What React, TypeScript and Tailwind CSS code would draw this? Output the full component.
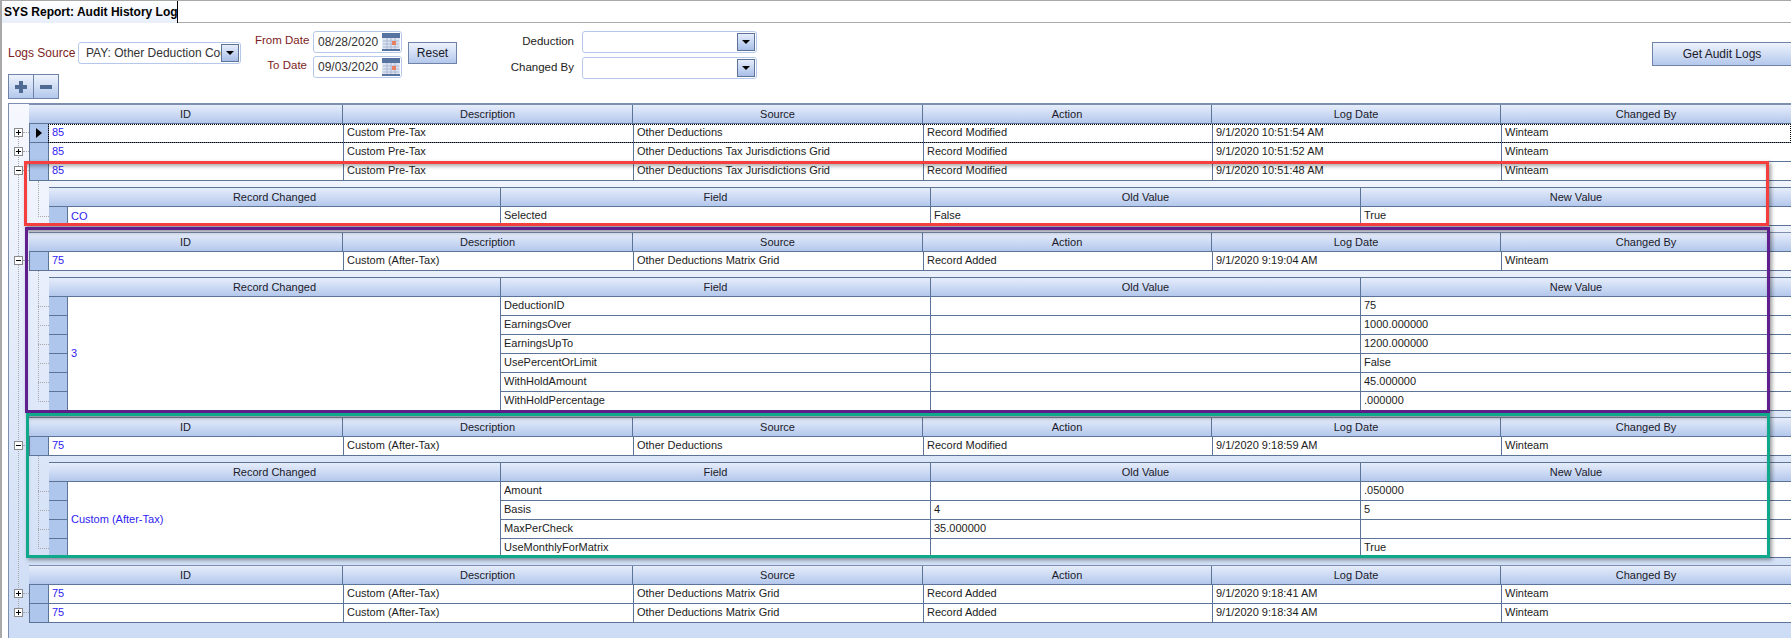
import React from "react";

const masterCols = "grid-cols-[19px_294px_290px_290px_289px_289px_1fr]";
const detailCols = "grid-cols-[19px_432px_430px_430px_1fr]";
const masterHeads = ["ID", "Description", "Source", "Action", "Log Date", "Changed By"];
const detailHeads = ["Record Changed", "Field", "Old Value", "New Value"];

type Row = string[];

function Expander({ open }: { open?: boolean }) {
  return (
    <span className="absolute left-[5px] top-[4px] w-[9px] h-[9px] border border-[#8a8a8a] bg-white flex items-center justify-center">
      <span className="relative block w-[5px] h-[1px] bg-black">
        {!open && <span className="absolute left-[2px] top-[-2px] w-[1px] h-[5px] bg-black" />}
      </span>
    </span>
  );
}

function HeadCell({ text, first }: { text: string; first?: boolean }) {
  return (
    <div className={`flex items-center justify-center h-full bg-gradient-to-b from-[#e6edfb] to-[#b4c8ec] border-b border-[#5d7499] ${first ? "" : "border-l"} border-[#5d7499] text-[#1a1a2a]`}>
      {text}
    </div>
  );
}

function MasterHeader() {
  return (
    <div className="ml-[20px] h-[20px] border-t border-[#7d8fae] flex bg-gradient-to-b from-[#e6edfb] to-[#b4c8ec]">
      <div className={`grid ${masterCols} w-full`}>
        <div className="col-span-2"><HeadCell text="ID" first /></div>
        {masterHeads.slice(1).map((h) => <HeadCell key={h} text={h} />)}
      </div>
    </div>
  );
}

function MasterRow({ cells, open, current }: { cells: Row; open?: boolean; current?: boolean }) {
  return (
    <div className="relative h-[19px] flex">
      <div className="relative w-[20px] shrink-0">
        <Expander open={open} />
        <span className="absolute left-[14px] top-[8px] w-[6px] border-t border-dotted border-[#a8a8a8]" />
      </div>
      <div className={`grid ${masterCols} w-full border-l border-b border-[#5d7499] bg-white`}>
        <div className="bg-[#aec5ec] border-r border-[#5d7499] flex items-center justify-center">
          {current && <span className="w-0 h-0 border-y-[5px] border-y-transparent border-l-[6px] border-l-black" />}
        </div>
        {cells.map((c, i) => (
          <div key={i} className={`flex items-center pl-[3px] pb-[1px] whitespace-nowrap overflow-hidden ${i > 0 ? "border-l border-[#5d7499]" : "text-[#2f23f2]"}`}>{c}</div>
        ))}
      </div>
      {current && <div className="absolute left-[39px] right-0 top-0 bottom-0 border border-dotted border-black pointer-events-none" />}
    </div>
  );
}

function Detail({ rows, record, gapTop }: { rows: Row[]; record: string; gapTop: string }) {
  return (
    <div className={`relative ml-[40px] ${gapTop}`}>
      {/* tree lines on the left of the child grid */}
      <span className="absolute left-[-11px] top-[-6px] border-l border-dotted border-[#a8a8a8]" style={{ height: 20 + (rows.length - 1) * 19 + 16 }} />
      {rows.map((_, i) => (
        <span key={i} className="absolute left-[-11px] w-[11px] border-t border-dotted border-[#a8a8a8]" style={{ top: 29 + i * 19 }} />
      ))}
      <div className={`grid ${detailCols} h-[20px] border-t border-[#5d7499]`}>
        <div className="col-span-2"><HeadCell text={detailHeads[0]} first /></div>
        {detailHeads.slice(1).map((h) => <HeadCell key={h} text={h} />)}
      </div>
      <div className="flex bg-white">
        <div className="w-[19px] shrink-0">
          {rows.map((_, i) => <div key={i} className="h-[19px] bg-[#aec5ec] border-r border-b border-[#5d7499]" />)}
        </div>
        <div className="w-[432px] shrink-0 flex items-center pl-[3px] text-[#2f23f2] border-b border-[#5d7499]">{record}</div>
        <div className="flex-1">
          {rows.map((r, i) => (
            <div key={i} className="grid grid-cols-[430px_430px_1fr] h-[19px] border-b border-[#5d7499]">
              {r.map((c, j) => <div key={j} className="flex items-center pl-[3px] pb-[1px] border-l border-[#5d7499] whitespace-nowrap">{c}</div>)}
            </div>
          ))}
        </div>
      </div>
    </div>
  );
}

function Combo({ width, value }: { width: string; value?: string }) {
  return (
    <div className={`${width} h-[22px] shrink-0 flex items-center justify-between rounded-[3px] border border-[#b5c8ec] bg-white pl-[7px] pr-[1px] overflow-hidden text-[12px]`}>
      <span className="text-[#333] whitespace-nowrap overflow-hidden">{value}</span>
      <span className="w-[18px] h-[18px] shrink-0 border border-[#5d7499] bg-gradient-to-b from-[#e6edfb] to-[#a9bfe8] flex items-center justify-center">
        <span className="w-0 h-0 border-x-[4px] border-x-transparent border-t-[4px] border-t-black" />
      </span>
    </div>
  );
}

function DateBox({ value }: { value: string }) {
  return (
    <div className="w-[89px] h-[22px] flex items-center justify-between rounded-[3px] border border-[#b5c8ec] bg-white pl-[4px] pr-[1px] text-[12px]">
      <span className="text-[#333]">{value}</span>
      <svg width="18" height="18" viewBox="0 0 18 18">
        <rect x="0" y="0" width="18" height="18" fill="#dfe5f1" />
        <rect x="0" y="0" width="18" height="5" fill="#56749f" />
        <rect x="0" y="16" width="18" height="2" fill="#56749f" />
        <path d="M1 8h16M1 11h16M1 14h16M5 5v11M9 5v11M13 5v11" stroke="#a9b8d4" strokeWidth="1" />
        <rect x="10" y="8" width="4" height="4" fill="#e8805f" />
      </svg>
    </div>
  );
}

function ToolButton({ className, children }: { className: string; children: React.ReactNode }) {
  return (
    <div className={`flex items-center justify-center border border-[#6f83a8] bg-gradient-to-b from-[#eef3fc] to-[#b4c8ec] text-[#1a1a2a] text-[12px] ${className}`}>
      {children}
    </div>
  );
}

export default function App() {
  return (
    <div className="relative w-[1791px] h-[638px] overflow-hidden bg-white border-l-2 border-t border-[#a9a9a9] text-[11px] leading-none text-[#1c1c1c] font-['Liberation_Sans',sans-serif]">
      {/* tab strip */}
      <div className="h-[22px] flex border-b border-[#a9a9a9]">
        <div className="w-[176px] h-[22px] flex items-center pl-[2px] bg-gradient-to-b from-white to-[#e8effb] border-r border-black font-bold text-[12px] text-black whitespace-nowrap">
          SYS Report: Audit History Log
        </div>
      </div>

      {/* filters */}
      <div className="h-[80px] flex">
        <div className="w-[253px] shrink-0 pl-[6px] pt-[19px]">
          <div className="flex items-center h-[22px]">
            <span className="w-[70px] text-[12px] text-[#7d1d1d]">Logs Source</span>
            <Combo width="w-[163px]" value="PAY: Other Deduction Codes" />
          </div>
          <div className="flex mt-[10px]">
            <ToolButton className="w-[26px] h-[25px]">
              <svg width="14" height="14" viewBox="0 0 14 14"><path d="M5 1h4v4h4v4H9v4H5V9H1V5h4z" fill="#4f6a93" /></svg>
            </ToolButton>
            <ToolButton className="w-[25px] h-[25px] border-l-0">
              <svg width="14" height="14" viewBox="0 0 14 14"><rect x="1" y="5" width="12" height="4" fill="#4f6a93" /></svg>
            </ToolButton>
          </div>
        </div>
        <div className="w-[149px] shrink-0 pt-[8px] flex flex-col gap-[3px]">
          <div className="flex items-center h-[22px]">
            <span className="w-[52px] pb-[3px] text-[11.5px] text-[#7d1d1d] whitespace-nowrap">From Date</span>
            <span className="ml-[6px]"><DateBox value="08/28/2020" /></span>
          </div>
          <div className="flex items-center h-[22px]">
            <span className="w-[52px] pb-[3px] text-[11.5px] text-right text-[#7d1d1d] whitespace-nowrap">To Date</span>
            <span className="ml-[6px]"><DateBox value="09/03/2020" /></span>
          </div>
        </div>
        <div className="w-[120px] shrink-0 pl-[4px] pt-[19px]">
          <ToolButton className="w-[49px] h-[22px]">Reset</ToolButton>
        </div>
        <div className="w-[233px] shrink-0 pt-[8px] flex flex-col gap-[4px]">
          <div className="flex items-center h-[22px] justify-end gap-[8px]">
            <span className="text-[11.5px] whitespace-nowrap">Deduction</span>
            <Combo width="w-[175px]" />
          </div>
          <div className="flex items-center h-[22px] justify-end gap-[8px]">
            <span className="text-[11.5px] whitespace-nowrap">Changed By</span>
            <Combo width="w-[175px]" />
          </div>
        </div>
        <div className="ml-auto pt-[19px]">
          <ToolButton className="w-[139px] h-[24px] border-r-0">Get Audit Logs</ToolButton>
        </div>
      </div>

      {/* audit log grid */}
      <div className="relative ml-[6px] h-[535px] border-l border-t border-[#7d8fae] bg-gradient-to-b from-[#f6f8fe] to-[#cddcf5]">
        <span className="absolute left-[9px] top-[28px] h-[480px] border-l border-dotted border-[#a8a8a8]" />
        <MasterHeader />
        <MasterRow current cells={["85", "Custom Pre-Tax", "Other Deductions", "Record Modified", "9/1/2020 10:51:54 AM", "Winteam"]} />
        <MasterRow cells={["85", "Custom Pre-Tax", "Other Deductions Tax Jurisdictions Grid", "Record Modified", "9/1/2020 10:51:52 AM", "Winteam"]} />
        <MasterRow open cells={["85", "Custom Pre-Tax", "Other Deductions Tax Jurisdictions Grid", "Record Modified", "9/1/2020 10:51:48 AM", "Winteam"]} />
        <Detail gapTop="mt-[6px]" record="CO" rows={[["Selected", "False", "True"]]} />

        <div className="mt-[6px]"><MasterHeader /></div>
        <MasterRow open cells={["75", "Custom (After-Tax)", "Other Deductions Matrix Grid", "Record Added", "9/1/2020 9:19:04 AM", "Winteam"]} />
        <Detail gapTop="mt-[6px]" record="3" rows={[
          ["DeductionID", "", "75"],
          ["EarningsOver", "", "1000.000000"],
          ["EarningsUpTo", "", "1200.000000"],
          ["UsePercentOrLimit", "", "False"],
          ["WithHoldAmount", "", "45.000000"],
          ["WithHoldPercentage", "", ".000000"],
        ]} />

        <div className="mt-[6px]"><MasterHeader /></div>
        <MasterRow open cells={["75", "Custom (After-Tax)", "Other Deductions", "Record Modified", "9/1/2020 9:18:59 AM", "Winteam"]} />
        <Detail gapTop="mt-[6px]" record="Custom (After-Tax)" rows={[
          ["Amount", "", ".050000"],
          ["Basis", "4", "5"],
          ["MaxPerCheck", "35.000000", ""],
          ["UseMonthlyForMatrix", "", "True"],
        ]} />

        <div className="mt-[7px]"><MasterHeader /></div>
        <MasterRow cells={["75", "Custom (After-Tax)", "Other Deductions Matrix Grid", "Record Added", "9/1/2020 9:18:41 AM", "Winteam"]} />
        <MasterRow cells={["75", "Custom (After-Tax)", "Other Deductions Matrix Grid", "Record Added", "9/1/2020 9:18:34 AM", "Winteam"]} />

        {/* highlight boxes drawn on top of the screenshot */}
        <div className="absolute left-[15px] top-[57px] w-[1745px] h-[65px] border-[3px] border-[#f53f3f] shadow-[2px_2px_4px_rgba(0,0,0,0.4),inset_0_4px_4px_-2px_rgba(0,0,0,0.35)] pointer-events-none" />
        <div className="absolute left-[16px] top-[123px] w-[1745px] h-[186px] border-[3px] border-[#5f1f8f] shadow-[2px_2px_4px_rgba(0,0,0,0.4),inset_0_4px_4px_-2px_rgba(0,0,0,0.35)] pointer-events-none" />
        <div className="absolute left-[17px] top-[309px] w-[1744px] h-[145px] border-[3px] border-[#0fa88a] shadow-[2px_2px_4px_rgba(0,0,0,0.4),inset_0_4px_4px_-2px_rgba(0,0,0,0.35)] pointer-events-none" />
      </div>
    </div>
  );
}
